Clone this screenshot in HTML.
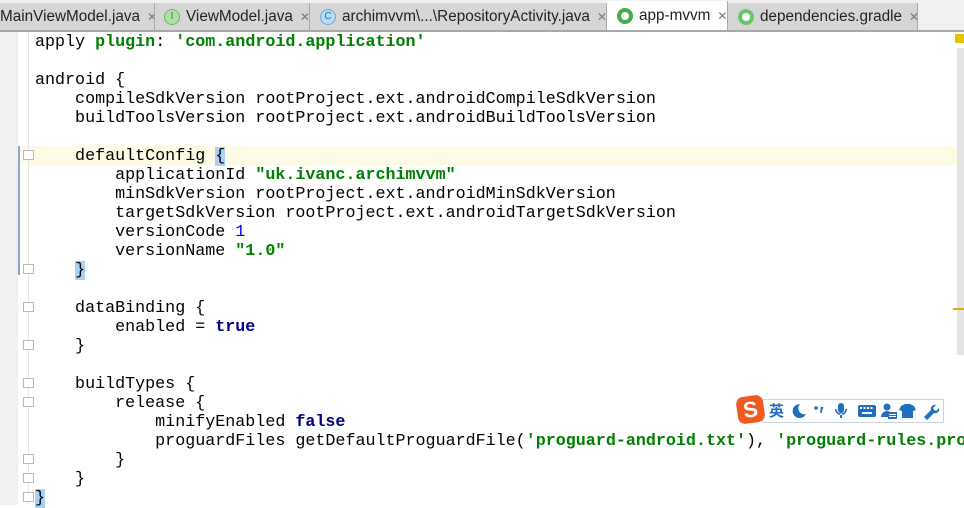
<!DOCTYPE html>
<html><head><meta charset="utf-8"><style>
*{margin:0;padding:0;box-sizing:border-box}
body{width:964px;height:505px;overflow:hidden;background:#fff;position:relative;font-family:"Liberation Sans",sans-serif}
.tabs{position:absolute;left:0;top:0;width:964px;height:32px;background:#f0f0f0;border-bottom:2px solid #a8a8a8}
.tab{position:absolute;top:3px;height:27px;background:#d6d6d6;border-right:1px solid #a9a9a9;font-size:15.3px;color:#222;white-space:nowrap;display:flex;align-items:center;overflow:hidden}
.tab.act{background:#fff;top:1px;height:29px}
.x{color:#777;font-size:12px;margin-left:7px}
.ic{display:inline-block;flex:none;width:16px;height:16px;border-radius:50%;margin-right:6px;font-size:10px;line-height:14px;text-align:center}
.gut{position:absolute;left:0;top:32px;width:18px;height:473px;background:#f0f0f0}
.gl{position:absolute;left:28px;top:32px;width:1px;height:473px;background:#e6e6e6}
.code{position:absolute;left:35px;top:33px;font-family:"Liberation Mono",monospace;font-size:16.7px;line-height:19px;color:#000;white-space:pre}
.s{color:#008000;font-weight:bold}
.k{color:#000080;font-weight:bold}
.n{color:#0000ff}
.cur{position:absolute;left:18px;top:146px;width:946px;height:19px;background:#fdfbe5}
.br{background:#a8d1f2}
.fold{position:absolute;left:23px;width:11px;height:10px;border:1px solid #b8b8b8;background:#fff}
</style></head><body>
<div class="tabs">
<div class="tab" style="left:0;width:155px;padding-left:0">MainViewModel.java<span class="x">✕</span></div>
<div class="tab" style="left:155px;width:155px;padding-left:9px"><span class="ic" style="background:#aee0a8;color:#3a7a35;border:1px solid #6bb565">I</span>ViewModel.java<span class="x">✕</span></div>
<div class="tab" style="left:310px;width:297px;padding-left:10px"><span class="ic" style="background:#b9dcf5;color:#2a6ea8;border:1px solid #6aa9d8">C</span>archimvvm\...\RepositoryActivity.java<span class="x">✕</span></div>
<div class="tab act" style="left:607px;width:121px;padding-left:10px"><span class="ic" style="border:4px solid #3fae4a;background:#fff"></span>app-mvvm<span class="x">✕</span></div>
<div class="tab" style="left:728px;width:190px;padding-left:10px"><span class="ic" style="border:4px solid #6cc36f;background:#fff"></span>dependencies.gradle<span class="x">✕</span></div>
</div>
<div class="gut"></div>
<div class="cur"></div>
<div class="gl"></div>
<div style="position:absolute;left:18px;top:146px;width:2px;height:129px;background:#8aa6cf"></div>
<div class="fold" style="top:150px"></div>
<div class="fold" style="top:264px"></div>
<div class="fold" style="top:302px"></div>
<div class="fold" style="top:340px"></div>
<div class="fold" style="top:378px"></div>
<div class="fold" style="top:397px"></div>
<div class="fold" style="top:454px"></div>
<div class="fold" style="top:473px"></div>
<div class="fold" style="top:492px"></div>
<div style="position:absolute;left:955px;top:34px;width:9px;height:9px;background:#e8c200"></div>
<div style="position:absolute;left:957px;top:48px;width:7px;height:307px;background:#e4e4e4"></div>
<div style="position:absolute;left:953px;top:308px;width:11px;height:2px;background:#d8b000"></div>
<div class="code">apply <span class="s">plugin</span>: <span class="s">'com.android.application'</span>

android {
    compileSdkVersion rootProject.ext.androidCompileSdkVersion
    buildToolsVersion rootProject.ext.androidBuildToolsVersion

    defaultConfig <span class="br">{</span>
        applicationId <span class="s">"uk.ivanc.archimvvm"</span>
        minSdkVersion rootProject.ext.androidMinSdkVersion
        targetSdkVersion rootProject.ext.androidTargetSdkVersion
        versionCode <span class="n">1</span>
        versionName <span class="s">"1.0"</span>
    <span class="br">}</span>

    dataBinding {
        enabled = <span class="k">true</span>
    }

    buildTypes {
        release {
            minifyEnabled <span class="k">false</span>
            proguardFiles getDefaultProguardFile(<span class="s">'proguard-android.txt'</span>), <span class="s">'proguard-rules.pro'</span>
        }
    }
<span class="br">}</span></div>
<div style="position:absolute;left:762px;top:399px;width:182px;height:24px;border:1px solid #c9d2e0;background:#fff"></div>
<div style="position:absolute;left:737px;top:396px;width:27px;height:27px;background:#f05a1e;border-radius:7px;transform:rotate(-8deg);color:#fff;font-weight:bold;font-size:22px;line-height:27px;text-align:center">S</div>
<div style="position:absolute;left:769px;top:400px;font-family:'Noto Sans CJK SC',sans-serif;font-size:15px;color:#1e6fc0;font-weight:bold;line-height:22px">英</div>
<svg style="position:absolute;left:788px;top:399px" width="156" height="24" viewBox="0 0 156 24">
<g fill="#1e6fc0">
<path d="M12 5a7 7 0 1 0 6 10a6 6 0 0 1-6-10z"/>
<circle cx="28" cy="9" r="1.8"/><path d="M33 8h2.5l-2 6h-1.5z"/>
<rect x="50" y="4" width="6" height="10" rx="3"/><path d="M47 10a6 6 0 0 0 12 0h-1.5a4.5 4.5 0 0 1-9 0z M52 15h2v4h-2z"/>
<rect x="70" y="6" width="18" height="12" rx="2"/>
<circle cx="99" cy="8" r="3.5"/><path d="M93 18a6 6 0 0 1 12 0z"/><rect x="100" y="13" width="9" height="7" fill="#1e6fc0"/>
<path d="M113 7l4-2h5l4 2 2 4-3 1v7h-11v-7l-3-1z"/>
<path d="M136 18l7-7a4 4 0 0 1 5-5l-3 3 1 2 2 1 3-3a4 4 0 0 1-5 5l-7 7z"/>
</g>
<g fill="#fff"><rect x="72" y="8" width="2" height="2"/><rect x="75.5" y="8" width="2" height="2"/><rect x="79" y="8" width="2" height="2"/><rect x="82.5" y="8" width="2" height="2"/><rect x="74" y="13" width="10" height="2"/><rect x="101" y="15" width="7" height="1"/><rect x="101" y="17" width="7" height="1"/></g>
</svg>
</body></html>
